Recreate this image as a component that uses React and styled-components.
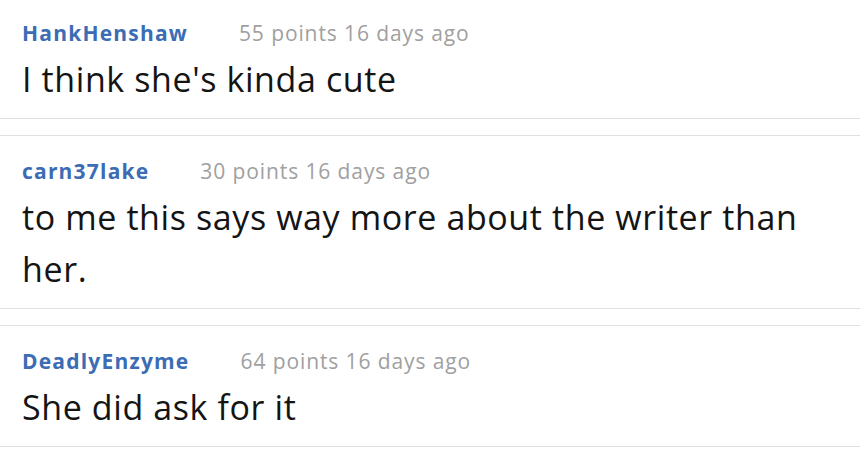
import React from 'react'
import styled, { createGlobalStyle } from 'styled-components'

const comments = [
  { user: 'HankHenshaw', points: 55, age: '16 days ago', text: "I think she's kinda cute" },
  { user: 'carn37lake', points: 30, age: '16 days ago', text: 'to me this says way more about the writer than her.' },
  { user: 'DeadlyEnzyme', points: 64, age: '16 days ago', text: 'She did ask for it' },
]

const App = () => {
  return (
    <>
      <GlobalStyle />
      <List>
        {comments.map((c) => (
          <Comment key={c.user}>
            <Meta>
              <User>{c.user}</User>
              <Info>{c.points} points {c.age}</Info>
            </Meta>
            <Body>{c.text}</Body>
          </Comment>
        ))}
      </List>
    </>
  )
}

export default App

const GlobalStyle = createGlobalStyle`
  body {
    margin: 0;
    background: #fff;
    font-family: 'Open Sans', 'Noto Sans', sans-serif;
    overflow: hidden;
  }
`

const List = styled.div`
  display: flex;
  flex-direction: column;
  gap: 16px;
  margin-top: -3px;
`

const Comment = styled.div`
  border-top: 1px solid #e0e0e0;
  border-bottom: 1px solid #e0e0e0;
  padding: 20px 22px 13px;
`

const Meta = styled.div`
  display: flex;
  align-items: baseline;
  line-height: 30px;
  font-size: 21px;
`

const User = styled.span`
  color: #3b6cb4;
  font-weight: 700;
  letter-spacing: 1.2px;
  margin-right: 51px;
`

const Info = styled.span`
  color: #a0a0a0;
  letter-spacing: 0.9px;
`

const Body = styled.div`
  margin-top: 5px;
  font-size: 34px;
  line-height: 52px;
  letter-spacing: 0.6px;
  color: #141414;
`
